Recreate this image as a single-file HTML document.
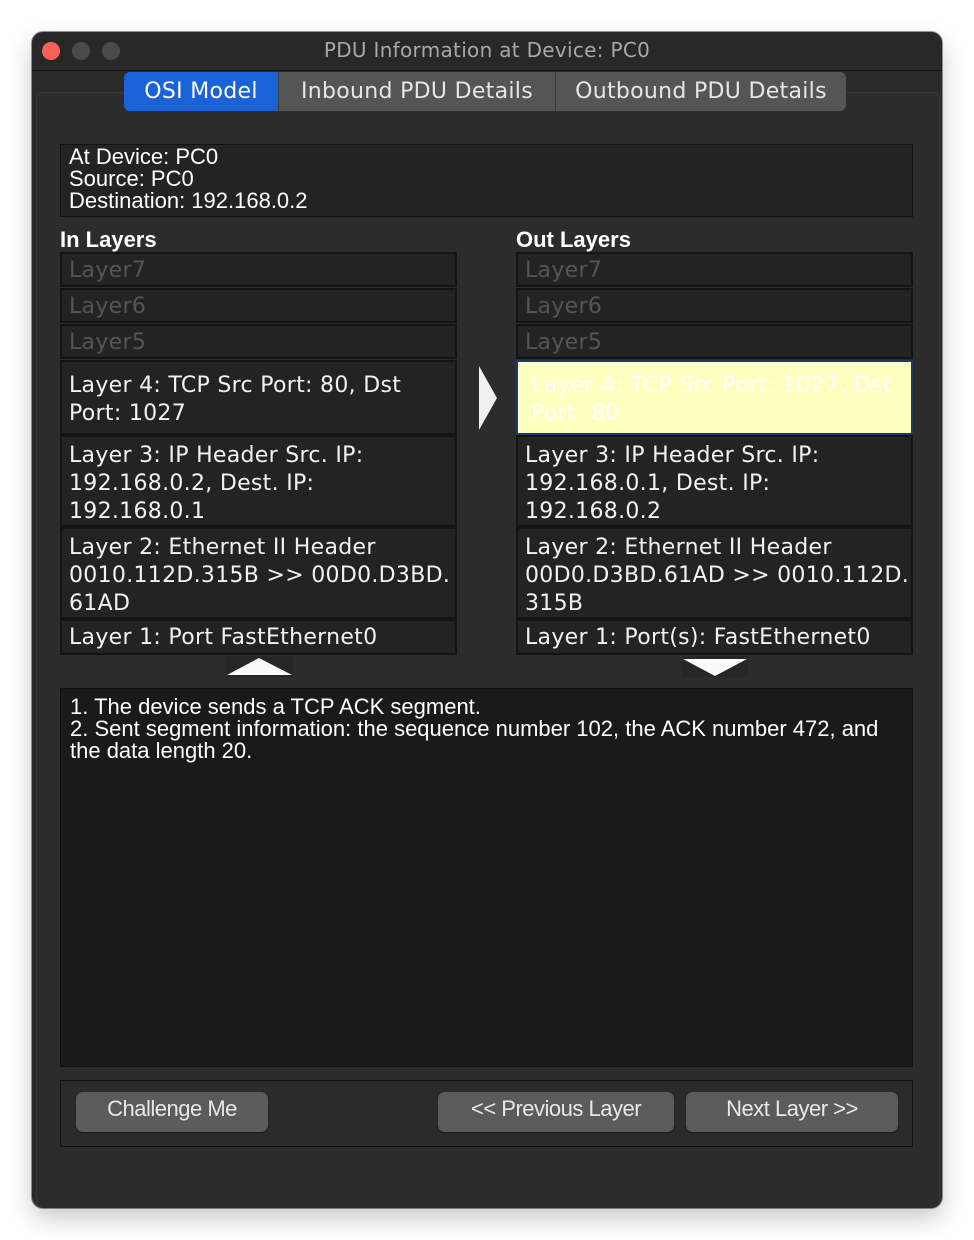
<!DOCTYPE html>
<html><head><meta charset="utf-8"><style>
*{box-sizing:border-box;margin:0;padding:0}
body{width:974px;height:1240px;background:#fff;position:relative;overflow:hidden;font-family:"Liberation Sans",sans-serif}
.win{position:absolute;left:32px;top:32px;width:910px;height:1176px;background:#2a2a2a;border-radius:11px;box-shadow:0 10px 25px rgba(0,0,0,.22),0 0 0 1px rgba(0,0,0,.4);overflow:hidden}
.title{position:absolute;left:0;top:0;width:910px;height:39px;background:#282828;border-bottom:1px solid #111;color:#a8a8a8;font-family:"DejaVu Sans",sans-serif;font-size:20px;text-align:center;line-height:37px;letter-spacing:.3px}
.dot{position:absolute;top:10px;width:18px;height:18px;border-radius:50%;background:#4a4a4a}
.panel{position:absolute;left:4px;top:60px;width:904px;height:1120px;background:#2c2c2c;border:1px solid #383838;border-radius:6px}
.tabs{position:absolute;left:92px;top:40px;height:39px;display:flex;border-radius:6px;overflow:hidden;font-family:"DejaVu Sans",sans-serif;font-size:22px;color:#e6e6e6}
.tab{height:39px;line-height:39px;background:#555;text-align:center;border-right:1px solid #3e3e3e;letter-spacing:.3px}
.tab.a{background:#1a62d8;color:#fff}
.box{position:absolute;border:1px solid #111;background:#232323}
.lay{position:absolute;background:#232323;border:2px solid #141414;font-family:"DejaVu Sans",sans-serif;font-size:22px;color:#f2f2f2;padding:5px 0 0 7px;line-height:28px;white-space:nowrap;letter-spacing:.3px}
.dim{color:#555;padding-top:3px;line-height:28px}
.hd{position:absolute;font-weight:bold;font-size:22px;color:#fff}
.btn{position:absolute;top:1092px;height:40px;background:#5b5b5b;border-radius:7px;color:#e8e8e8;font-size:22px;text-align:center;line-height:34px;letter-spacing:-.5px;box-shadow:0 1px 1px rgba(0,0,0,.4)}
</style></head><body>
<div class="win">
<div class="title">PDU Information at Device: PC0</div>
<div class="dot" style="left:10px;background:#fe5f57"></div>
<div class="dot" style="left:40px"></div>
<div class="dot" style="left:70px"></div>
<div class="panel"></div>
<div class="tabs"><div class="tab a" style="width:155px">OSI Model</div><div class="tab" style="width:277px">Inbound PDU Details</div><div class="tab" style="width:290px;border:none">Outbound PDU Details</div></div>
</div>
<div class="box" style="left:60px;top:144px;width:853px;height:73px;padding:1px 0 0 8px;color:#fff;font-size:22px;line-height:22px">At Device: PC0<br>Source: PC0<br>Destination: 192.168.0.2</div>
<div class="hd" style="left:60px;top:227px">In Layers</div>
<div class="hd" style="left:516px;top:227px">Out Layers</div>

<div class="lay dim" style="left:60px;top:252px;width:397px;height:35px">Layer7</div>
<div class="lay dim" style="left:60px;top:288px;width:397px;height:35px">Layer6</div>
<div class="lay dim" style="left:60px;top:324px;width:397px;height:35px">Layer5</div>
<div class="lay" style="left:60px;top:360px;width:397px;height:75px;padding-top:10px">Layer 4: TCP Src Port: 80, Dst<br>Port: 1027</div>
<div class="lay" style="left:60px;top:435px;width:397px;height:92px">Layer 3: IP Header Src. IP:<br>192.168.0.2, Dest. IP:<br>192.168.0.1</div>
<div class="lay" style="left:60px;top:527px;width:397px;height:92px">Layer 2: Ethernet II Header<br>0010.112D.315B &gt;&gt; 00D0.D3BD.<br>61AD</div>
<div class="lay" style="left:60px;top:619px;width:397px;height:36px;padding-top:3px">Layer 1: Port FastEthernet0</div>

<div class="lay dim" style="left:516px;top:252px;width:397px;height:35px">Layer7</div>
<div class="lay dim" style="left:516px;top:288px;width:397px;height:35px">Layer6</div>
<div class="lay dim" style="left:516px;top:324px;width:397px;height:35px">Layer5</div>
<div class="lay" style="left:516px;top:360px;width:397px;height:75px;background:#ffffbf;border-color:#1c3a6e;color:#fff;padding:10px 0 0 13px">Layer 4: TCP Src Port: 1027, Dst<br>Port: 80</div>
<div class="lay" style="left:516px;top:435px;width:397px;height:92px">Layer 3: IP Header Src. IP:<br>192.168.0.1, Dest. IP:<br>192.168.0.2</div>
<div class="lay" style="left:516px;top:527px;width:397px;height:92px">Layer 2: Ethernet II Header<br>00D0.D3BD.61AD &gt;&gt; 0010.112D.<br>315B</div>
<div class="lay" style="left:516px;top:619px;width:397px;height:36px;padding-top:3px">Layer 1: Port(s): FastEthernet0</div>

<svg style="position:absolute;left:0;top:0" width="974" height="1240">
<polygon points="479,366 497,398 479,430" fill="#f0f0f0"/>
<rect x="226" y="656" width="67" height="21" fill="#262626"/>
<polygon points="227,675 259,658 292,675" fill="#fafafa"/>
<rect x="682" y="656" width="66" height="21" fill="#262626"/>
<polygon points="683,659 747,659 715,676" fill="#fafafa"/>
</svg>

<div class="box" style="left:60px;top:688px;width:853px;height:379px;background:#1a1a1a;padding:7px 0 0 9px;color:#fff;font-size:22px;line-height:22px;white-space:nowrap">1. The device sends a TCP ACK segment.<br>2. Sent segment information: the sequence number 102, the ACK number 472, and<br>the data length 20.</div>
<div class="box" style="left:60px;top:1080px;width:853px;height:67px;background:#2b2b2b"></div>
<div class="btn" style="left:76px;width:192px">Challenge Me</div>
<div class="btn" style="left:438px;width:236px">&lt;&lt; Previous Layer</div>
<div class="btn" style="left:686px;width:212px">Next Layer &gt;&gt;</div>
</body></html>
